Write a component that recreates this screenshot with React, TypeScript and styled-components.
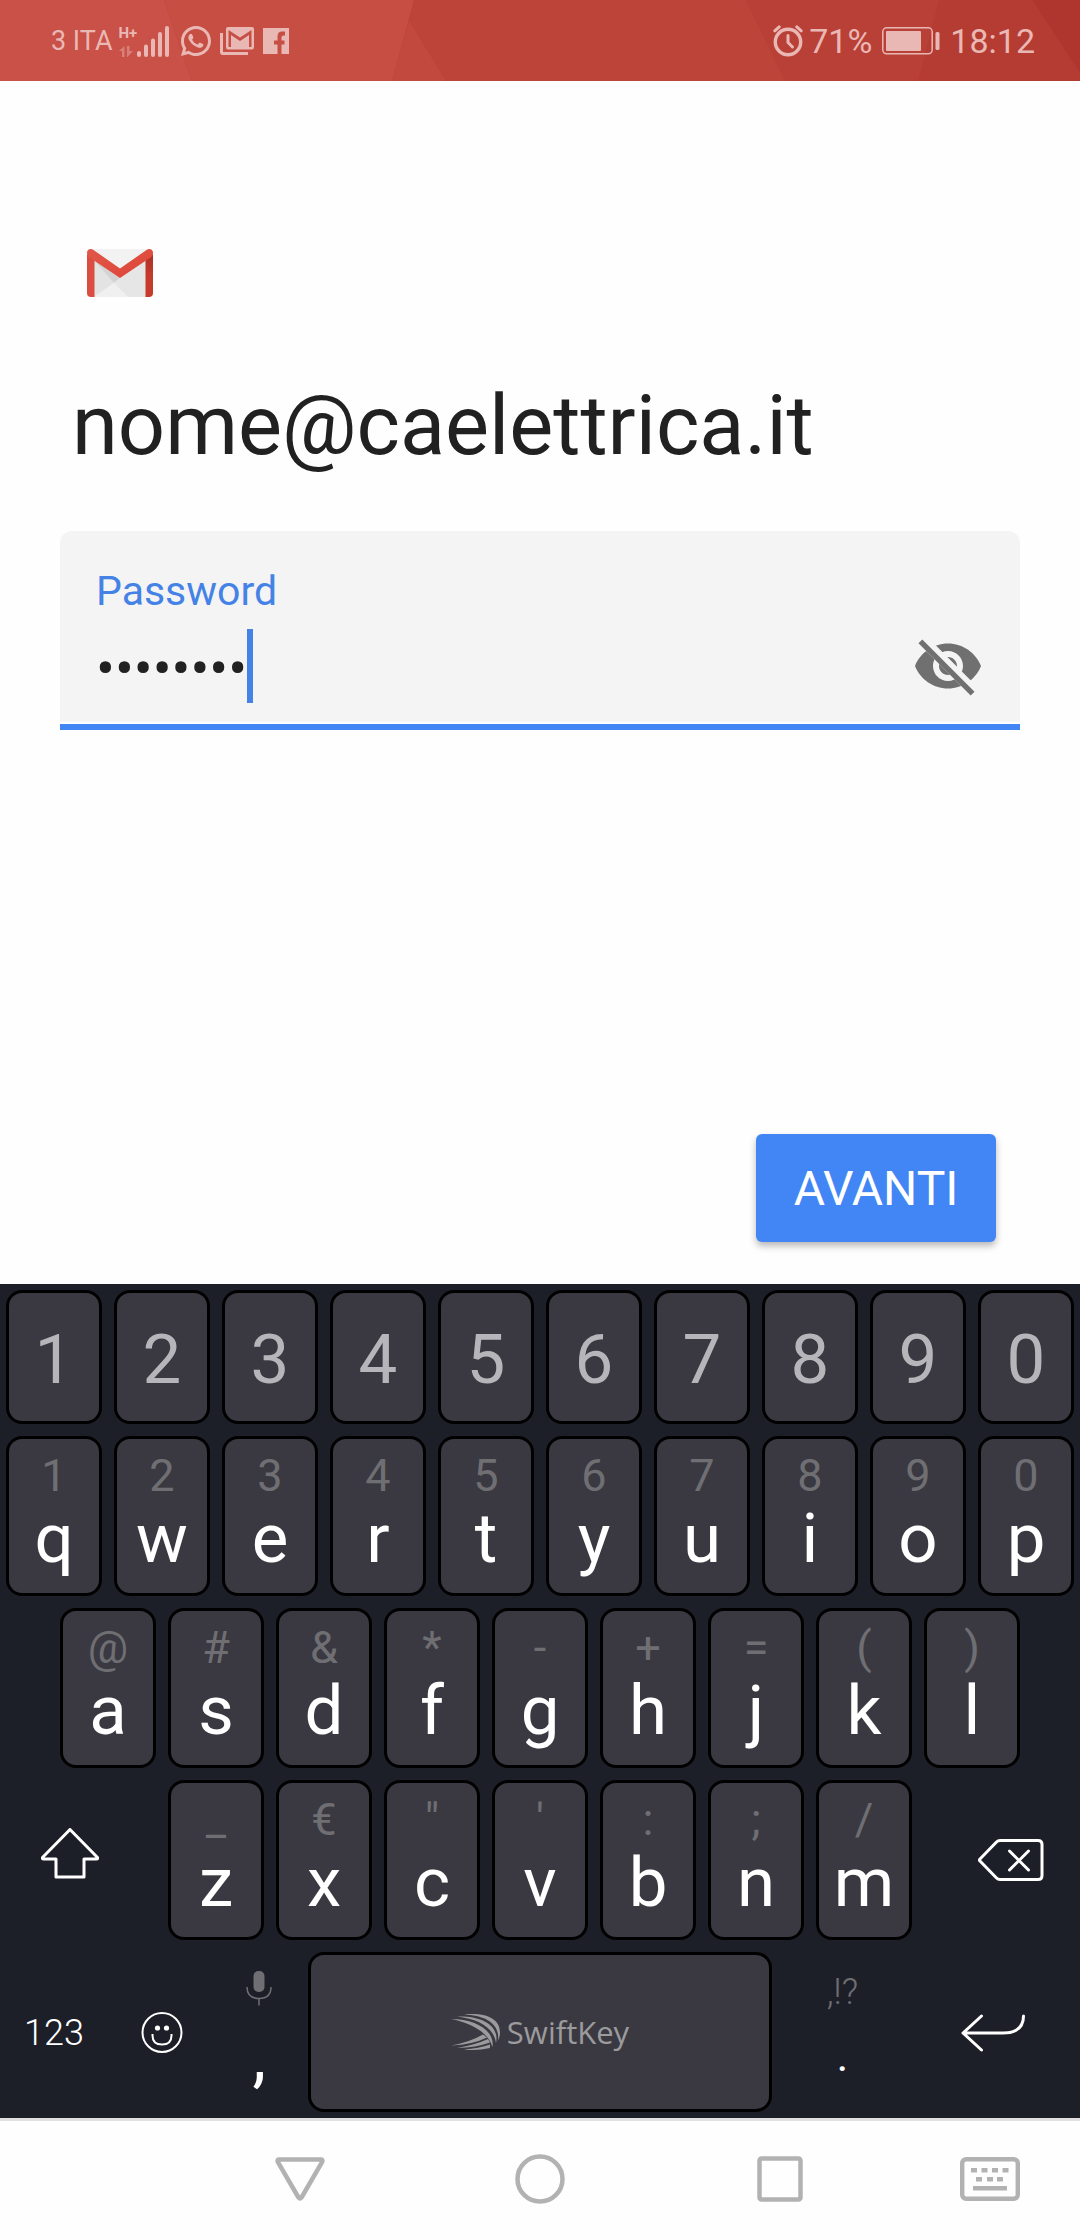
import React from "react";
import styled, { createGlobalStyle } from "styled-components";
import { RiWhatsappLine } from "react-icons/ri";

const GlobalStyle = createGlobalStyle`
  *, *::before, *::after { box-sizing: border-box; }
  body { margin: 0; background: #fefefe; font-family: Roboto, "Noto Sans", sans-serif; }
  button, input { font-family: inherit; }
  svg { display: block; flex: none; }
`;

const Screen = styled.div`
  display: flex;
  flex-direction: column;
  min-height: 100vh;
`;

/* ---------- status bar ---------- */

const StatusBar = styled.header`
  position: relative;
  display: flex;
  align-items: center;
  justify-content: space-between;
  height: 81px;
  padding: 0 45px 0 51px;
  background: #bc4237;
  color: #eab8b4;
  overflow: hidden;
`;

const StatusBackdrop = styled.svg`
  position: absolute;
  inset: 0;
  width: 100%;
  height: 100%;
`;

const StatusGroup = styled.div<{ $gap: number }>`
  position: relative;
  display: flex;
  align-items: center;
  gap: ${(p) => p.$gap}px;
`;

const Carrier = styled.span`
  font-size: 27px;
  line-height: 32px;
`;

const StatusValue = styled.span`
  font-size: 34px;
  line-height: 40px;
`;

const Signal = styled.div`
  display: flex;
  align-items: flex-end;
  height: 32px;
`;

const NetworkType = styled.div`
  display: flex;
  flex-direction: column;
  justify-content: space-between;
  height: 32px;
  width: 18px;
  font-size: 15px;
  font-weight: 700;
  line-height: 16px;
`;

const Cluster = styled.div<{ $gap: number }>`
  display: flex;
  align-items: center;
  gap: ${(p) => p.$gap}px;
`;

/* ---------- sign-in form ---------- */

const Main = styled.main`
  flex: 1;
  display: flex;
  flex-direction: column;
  padding: 168px 60px 42px;
`;

const Logo = styled.div`
  padding-left: 27px;
`;

const Heading = styled.h1`
  margin: 80px 0 56px;
  padding-left: 12px;
  font-size: 83px;
  line-height: 98px;
  font-weight: 400;
  color: #212121;
`;

const Field = styled.div`
  padding-bottom: 2px;
  border-bottom: 6px solid #4285f4;
`;

const FieldBody = styled.div`
  display: flex;
  flex-direction: column;
  gap: 14px;
  padding: 36px 36px 19px;
  border-radius: 12px 12px 0 0;
  background: #f4f4f4;
`;

const FieldLabel = styled.label`
  font-size: 41px;
  line-height: 48px;
  color: #4582e6;
`;

const FieldRow = styled.div`
  display: flex;
  align-items: center;
  height: 74px;
`;

const PasswordInput = styled.input`
  field-sizing: content;
  min-width: 0;
  height: 74px;
  padding: 6px 0 0;
  border: 0;
  outline: 0;
  background: none;
  color: #212121;
  caret-color: transparent;
  font-size: 56px;
`;

const Caret = styled.span`
  width: 6px;
  height: 74px;
  background: #4582e6;
`;

const IconButton = styled.button`
  display: flex;
  padding: 0;
  border: 0;
  background: none;
  color: #707070;
`;

const RevealButton = styled(IconButton)`
  margin-left: auto;
`;

const Actions = styled.div`
  display: flex;
  justify-content: flex-end;
  margin-top: auto;
  padding-right: 24px;
`;

const NextButton = styled.button`
  min-width: 240px;
  height: 108px;
  padding: 2px 36px 0;
  border: 0;
  border-radius: 6px;
  background: #4285f4;
  color: #fff;
  font-size: 48px;
  line-height: 56px;
  box-shadow: 0 4px 7px rgba(0, 0, 0, 0.28);
`;

/* ---------- keyboard ---------- */

const Keyboard = styled.section`
  display: flex;
  flex-direction: column;
  gap: 12px;
  padding: 6px 0;
  background: #1d1f28;
`;

const KeyRow = styled.div<{ $columns: string; $inset?: string; $height?: number }>`
  display: grid;
  grid-template-columns: ${(p) => p.$columns};
  height: ${(p) => p.$height ?? 160}px;
  padding: 0 ${(p) => p.$inset ?? "0"};
`;

const Key = styled.button`
  display: flex;
  flex-direction: column;
  align-items: center;
  min-width: 0;
  margin: 0 6px;
  padding: 12px 0 0;
  border: 3px solid #000;
  border-radius: 16px;
  background: #3a3941;
  color: #fff;
`;

const DigitKey = styled(Key)`
  justify-content: center;
  padding-top: 6px;
  color: #b6b5ba;
`;

const SpaceKey = styled(Key)`
  flex-direction: row;
  align-items: center;
  justify-content: center;
  gap: 6px;
  padding: 0;
  color: #9b9b9d;
  font-family: "Open Sans", "Noto Sans", sans-serif;
  font-size: 31px;
  line-height: 44px;
`;

const PlainKey = styled.button<{ $shift?: "left" | "right" }>`
  display: flex;
  flex-direction: column;
  align-items: center;
  justify-content: center;
  min-width: 0;
  border: 0;
  background: none;
  color: #fff;
  font-size: 36px;
  font-weight: 300;
  line-height: 44px;
  padding: 2px ${(p) => (p.$shift === "left" ? 22 : 0)}px 0 ${(p) => (p.$shift === "right" ? 24 : 0)}px;
`;

const StackKey = styled(PlainKey)`
  justify-content: flex-start;
  padding-top: 18px;
`;

const Glyph = styled.span`
  font-size: 69px;
  line-height: 76px;
`;

const Hint = styled.span`
  font-size: 45px;
  line-height: 50px;
  color: #6f6f73;
`;

const SmallHint = styled.span`
  height: 60px;
  color: #6f6f73;
`;

const Punctuation = styled.span<{ $size: number }>`
  font-size: ${(p) => p.$size}px;
  font-weight: 400;
  line-height: 52px;
`;

/* ---------- navigation bar ---------- */

const NavBar = styled.nav`
  display: grid;
  grid-template-columns: 3fr 4fr 4fr 4fr 3fr;
  align-items: center;
  height: 122px;
  padding-bottom: 4px;
  border-top: 3px solid #e2dfe3;
  background: #fefefe;
`;

const NavButton = styled(IconButton)`
  justify-content: center;
  color: #b2b2b2;
`;

/* ---------- data ---------- */

const digits = ["1", "2", "3", "4", "5", "6", "7", "8", "9", "0"];

const rows = {
  top: [["q", "1"], ["w", "2"], ["e", "3"], ["r", "4"], ["t", "5"], ["y", "6"], ["u", "7"], ["i", "8"], ["o", "9"], ["p", "0"]],
  home: [["a", "@"], ["s", "#"], ["d", "&"], ["f", "*"], ["g", "-"], ["h", "+"], ["j", "="], ["k", "("], ["l", ")"]],
  bottom: [["z", "_"], ["x", "€"], ["c", "\""], ["v", "'"], ["b", ":"], ["n", ";"], ["m", "/"]],
};

const LetterKeys = ({ keys }: { keys: string[][] }) => (
  <>
    {keys.map(([letter, hint]) => (
      <Key key={letter} type="button">
        <Hint>{hint}</Hint>
        <Glyph>{letter}</Glyph>
      </Key>
    ))}
  </>
);

/* ---------- icons ---------- */

const Arrows = () => (
  <svg width="14" height="11" viewBox="0 0 14 11" fill="currentColor" opacity="0.45">
    <path d="M0 5 L5.500 0 V11 H3 V5Z" />
    <path d="M8 0 H10.500 V5 H14 L8.500 11 H8Z" />
  </svg>
);

const Bars = () => (
  <svg width="32" height="31" viewBox="0 0 32 31" stroke="currentColor" strokeWidth="4" strokeLinecap="round">
    <path d="M2 27V29M9 20.500V29M16 14.500V29M23 8V29M30 2V29" />
  </svg>
);

const GmailStack = () => (
  <svg width="34" height="28" viewBox="0 0 34 28">
    <path d="M1.500 6V25Q1.500 26.500 3 26.500H28" fill="none" stroke="currentColor" strokeWidth="3" />
    <path
      fill="currentColor"
      fillRule="evenodd"
      d="M8 0H32Q34 0 34 2V20Q34 22.500 32 22.500H8Q6 22.500 6 20V2Q6 0 8 0ZM8.500 3V20H11V8L20 14L29 8V20H31.500V3L20 10.500Z"
    />
  </svg>
);

const Facebook = () => (
  <svg width="26" height="26" viewBox="0 0 26 26" fill="currentColor">
    <path d="M0 0H26V26H18.500V16.500H21.500V12.500H18.500V9.500Q18.500 7.500 20.500 7.500H22V3.500H19Q14.500 3.500 14.500 8.500V12.500H11V16.500H14.500V26H0Z" />
  </svg>
);

const Alarm = () => (
  <svg width="30" height="32" viewBox="0 0 30 32" fill="none" stroke="currentColor" strokeWidth="3.400" strokeLinecap="round">
    <circle cx="15" cy="17" r="12.700" />
    <path d="M15 10.500V17.500L19.500 22" strokeWidth="3" />
    <path d="M1.800 5.800L6.200 1.800M28.200 5.800L23.800 1.800" strokeWidth="3" />
  </svg>
);

const Battery = () => (
  <svg width="58" height="28" viewBox="0 0 58 28" fill="currentColor">
    <rect x="0.800" y="0.800" width="49.400" height="26" rx="4" fill="none" stroke="currentColor" strokeWidth="1.500" />
    <rect x="4" y="4" width="35" height="20" rx="1" />
    <rect x="53.500" y="5" width="4" height="18" rx="1.500" />
  </svg>
);

const GmailLogo = () => (
  <svg width="66" height="48" viewBox="0 0 66 48" role="img" aria-label="Gmail">
    <defs>
      <linearGradient id="flap" x1="0" y1="0" x2="1" y2="1">
        <stop offset="0" stopColor="#e0584a" />
        <stop offset="1" stopColor="#de4437" />
      </linearGradient>
      <linearGradient id="rightEdge" x1="0" y1="0" x2="0" y2="1">
        <stop offset="0" stopColor="#a93126" />
        <stop offset="0.500" stopColor="#c63a2c" />
      </linearGradient>
    </defs>
    <rect x="3" y="0" width="60" height="48" fill="#ececec" />
    <path d="M7 10L27 34L7 48Z" fill="#e3e3e3" />
    <path d="M7 11L33 29L27 34Z" fill="#d3d3d3" />
    <path d="M33 29L59 11V48H41L27 34Z" fill="#e6e6e6" />
    <path d="M8 47L27 34L41 48H8Z" fill="#f0f0f0" />
    <path d="M5 0H61L33 19Z" fill="#f2f2f2" />
    <path d="M0 5L7.500 11V48H4Q0 48 0 44Z" fill="#db4d40" />
    <path d="M66 5L58.500 11V48H62Q66 48 66 44Z" fill="url(#rightEdge)" />
    <path d="M0 4Q0 0 4 0Q5 0 6.500 1L33 19.500L59.500 1Q61 0 62 0Q66 0 66 4Q66 7 63.500 8.500L33 29L2.500 8.500Q0 7 0 4Z" fill="url(#flap)" />
  </svg>
);

const EyeOff = () => (
  <svg width="72" height="72" viewBox="0 0 24 24" fill="currentColor">
    <clipPath id="strike">
      <path d="M2 4.270L19.730 22L22.270 19.460L4.540 1.730V1H23V23H1V4.270Z" />
    </clipPath>
    <path
      clipPath="url(#strike)"
      d="M12 4.500C7 4.500 2.730 7.610 1 12c1.730 4.390 6 7.500 11 7.500s9.270-3.110 11-7.500c-1.730-4.390-6-7.500-11-7.500zM12 17c-2.760 0-5-2.240-5-5s2.240-5 5-5 5 2.240 5 5-2.240 5-5 5zm0-8c-1.660 0-3 1.340-3 3s1.340 3 3 3 3-1.340 3-3-1.340-3-3-3z"
    />
    <path d="M2.800 3.800L20.200 21.200" stroke="currentColor" strokeWidth="1.800" fill="none" />
  </svg>
);

const Shift = () => (
  <svg width="58" height="66" viewBox="0 0 58 66" fill="none" stroke="currentColor" strokeWidth="3" strokeLinejoin="round">
    <path d="M29 1.500L56.500 29.500Q57 31 55.500 31H43V49H15V31H2.500Q1 31 1.500 29.500Z" />
  </svg>
);

const Backspace = () => (
  <svg width="66" height="44" viewBox="0 0 66 44" fill="none" stroke="currentColor" strokeWidth="3" strokeLinecap="round" strokeLinejoin="round">
    <path d="M22 1.500H60Q64 1.500 64 5.500V36.500Q64 40.500 60 40.500H22Q20 40.500 18.500 39L2 22Q1 21 2 20L18.500 3Q20 1.500 22 1.500Z" />
    <path d="M31.500 12L50.500 31M50.500 12L31.500 31" />
  </svg>
);

const Smile = () => (
  <svg width="42" height="42" viewBox="0 0 42 42" fill="none" stroke="currentColor" strokeWidth="2">
    <circle cx="21" cy="20.500" r="19.500" />
    <path d="M11.500 22V23.500Q11.500 32.500 21 32.500T30.500 23.500V22" />
    <circle cx="16.500" cy="16" r="2.600" fill="currentColor" stroke="none" />
    <circle cx="25.500" cy="16" r="2.600" fill="currentColor" stroke="none" />
  </svg>
);

const Mic = () => (
  <svg width="26" height="60" viewBox="0 0 26 60" fill="none" stroke="#6f6f73" strokeWidth="1.500">
    <rect x="7.500" y="1" width="11" height="21" rx="5" fill="#6f6f73" stroke="none" />
    <path d="M1 17Q1 28.500 13 28.500T25 17M13 28.500V35.500" />
  </svg>
);

const Enter = () => (
  <svg width="66" height="38" viewBox="0 0 66 38" fill="none" stroke="currentColor" strokeWidth="3" strokeLinecap="round" strokeLinejoin="round">
    <path d="M20.500 2L2 19L20.500 36M2 19H42Q62.500 19 62.500 2" />
  </svg>
);

const SwiftKeyMark = () => (
  <svg width="50" height="36" viewBox="0 0 50 36" fill="currentColor">
    <path d="M13 0.500C32 -1.500 50 3 49 20Q48.500 24 47 26.500C49 9 34 1.500 13 0.500Z" />
    <path d="M6 2.500C28 1.500 49 10 45 29C43 14 28 5 6 2.500Z" />
    <path d="M0 5C24 5 44 16 41.500 33C37 18 20 9 0 5Z" />
    <path d="M32 20.500L36 23.500Q22 30.500 0 31.500Q18 28.500 32 20.500Z" />
    <path d="M37 25L39 28.500Q25 33.500 6 34Q24 31 37 25Z" />
    <path d="M39 30.500L39 34Q26 37 13 35.500Q28 34.500 39 30.500Z" />
  </svg>
);

const Back = () => (
  <svg width="50" height="44" viewBox="0 0 50 44" fill="none" stroke="currentColor" strokeWidth="4.500" strokeLinejoin="round">
    <path d="M3.500 2.500H46.500Q48 3 47.200 4.800L26.500 40.500Q25 42.500 23.500 40.500L2.800 4.800Q2 3 3.500 2.500Z" />
  </svg>
);

const Home = () => (
  <svg width="50" height="50" viewBox="0 0 50 50" fill="none" stroke="currentColor" strokeWidth="4.500">
    <circle cx="25" cy="25" r="22.500" />
  </svg>
);

const Recents = () => (
  <svg width="46" height="46" viewBox="0 0 46 46" fill="none" stroke="currentColor" strokeWidth="4.500">
    <rect x="2.500" y="2.500" width="41" height="41" rx="2" />
  </svg>
);

const KeyboardIcon = () => (
  <svg width="60" height="44" viewBox="0 0 60 44" fill="currentColor">
    <rect x="2.200" y="2.200" width="55.600" height="39.600" rx="4" fill="none" stroke="currentColor" strokeWidth="4.400" />
    <path d="M11 11h6v4.500h-6zM21.500 11h6v4.500h-6zM32 11h6v4.500h-6zM42.500 11h6v4.500h-6zM16 20h6v4.500h-6zM27 20h6v4.500h-6zM37 20h6v4.500h-6zM13 29h34v4.500H13z" />
  </svg>
);

export default function App() {
  return (
    <Screen>
      <GlobalStyle />
      <StatusBar>
        <StatusBackdrop viewBox="0 0 1080 81" preserveAspectRatio="none" aria-hidden="true">
          <path d="M0 0H164L192 81H0Z" fill="#c95147" />
          <path d="M164 0H414L392 81H192Z" fill="#c64e43" />
          <path d="M409 20L446 81H392Z" fill="#c2493e" />
          <path d="M414 0H746L785 81H446L409 20Z" fill="#bc4438" />
          <path d="M746 0H939L918 81H785Z" fill="#b94036" />
          <path d="M939 0H1032L1080 73V81H918Z" fill="#b53c33" />
          <path d="M1032 0H1080V73Z" fill="#af362e" />
        </StatusBackdrop>
        <StatusGroup $gap={9}>
          <Cluster $gap={6}>
            <Carrier>3 ITA</Carrier>
            <Signal>
              <NetworkType>
                H+
                <Arrows />
              </NetworkType>
              <Bars />
            </Signal>
          </Cluster>
          <Cluster $gap={6}>
            <RiWhatsappLine size={36} />
            <GmailStack />
          </Cluster>
          <Facebook />
        </StatusGroup>
        <StatusGroup $gap={10}>
          <Cluster $gap={6}>
            <Alarm />
            <StatusValue>71%</StatusValue>
          </Cluster>
          <Battery />
          <StatusValue>18:12</StatusValue>
        </StatusGroup>
      </StatusBar>

      <Main>
        <Logo>
          <GmailLogo />
        </Logo>
        <Heading>nome@caelettrica.it</Heading>
        <Field>
          <FieldBody>
            <FieldLabel htmlFor="password">Password</FieldLabel>
            <FieldRow>
              <PasswordInput id="password" type="password" defaultValue="password" />
              <Caret />
              <RevealButton type="button" aria-label="Mostra password">
                <EyeOff />
              </RevealButton>
            </FieldRow>
          </FieldBody>
        </Field>
        <Actions>
          <NextButton type="button">AVANTI</NextButton>
        </Actions>
      </Main>

      <Keyboard>
        <KeyRow $columns="repeat(10, 1fr)" $height={134}>
          {digits.map((digit) => (
            <DigitKey key={digit} type="button">
              <Glyph>{digit}</Glyph>
            </DigitKey>
          ))}
        </KeyRow>
        <KeyRow $columns="repeat(10, 1fr)">
          <LetterKeys keys={rows.top} />
        </KeyRow>
        <KeyRow $columns="repeat(9, 1fr)" $inset="5%">
          <LetterKeys keys={rows.home} />
        </KeyRow>
        <KeyRow $columns="3fr repeat(7, 2fr) 3fr">
          <PlainKey type="button" $shift="left" aria-label="Maiuscole">
            <Shift />
          </PlainKey>
          <LetterKeys keys={rows.bottom} />
          <PlainKey type="button" $shift="right" aria-label="Cancella">
            <Backspace />
          </PlainKey>
        </KeyRow>
        <KeyRow $columns="5fr 5fr 4fr 22fr 6fr 8fr">
          <PlainKey type="button">123</PlainKey>
          <PlainKey type="button" aria-label="Emoji">
            <Smile />
          </PlainKey>
          <StackKey type="button">
            <Mic />
            <Punctuation $size={69}>,</Punctuation>
          </StackKey>
          <SpaceKey type="button">
            <SwiftKeyMark />
            SwiftKey
          </SpaceKey>
          <StackKey type="button">
            <SmallHint>,!?</SmallHint>
            <Punctuation $size={45}>.</Punctuation>
          </StackKey>
          <PlainKey type="button" aria-label="Invio">
            <Enter />
          </PlainKey>
        </KeyRow>
      </Keyboard>

      <NavBar>
        <span />
        <NavButton type="button" aria-label="Indietro">
          <Back />
        </NavButton>
        <NavButton type="button" aria-label="Home">
          <Home />
        </NavButton>
        <NavButton type="button" aria-label="Recenti">
          <Recents />
        </NavButton>
        <NavButton type="button" aria-label="Tastiera">
          <KeyboardIcon />
        </NavButton>
      </NavBar>
    </Screen>
  );
}
